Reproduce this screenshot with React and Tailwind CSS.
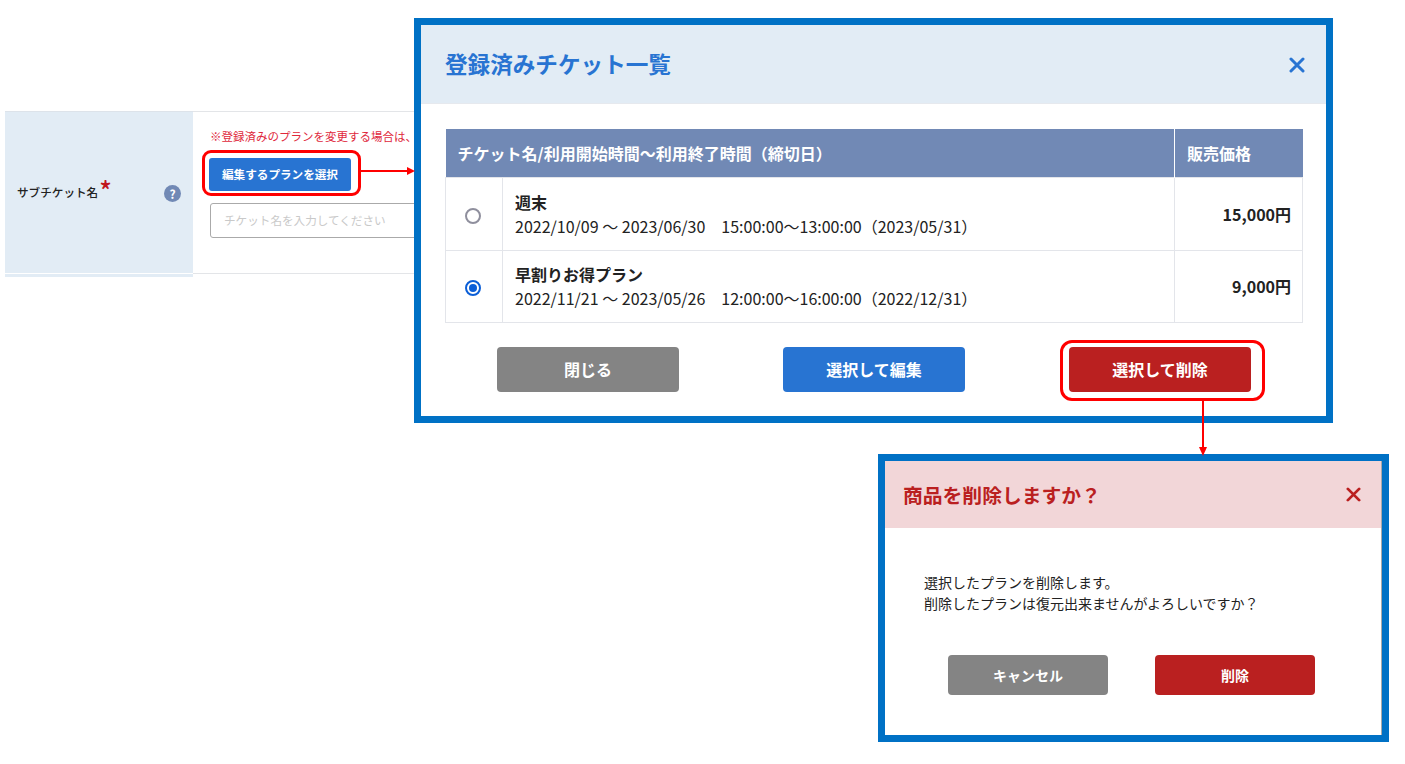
import React from "react";

function Radio({ checked }) {
  return (
    <span className={`flex h-4 w-4 items-center justify-center rounded-full border-2 ${checked ? "border-[#0b5ed7]" : "border-[#8f8f9d]"}`}>
      {checked && <span className="h-2 w-2 rounded-full bg-[#0b5ed7]" />}
    </span>
  );
}

function Close({ color, size }) {
  return (
    <svg width={size} height={size} viewBox="0 0 16 16" fill="none" stroke={color} strokeWidth="3" strokeLinecap="round">
      <path d="M2 2 L14 14 M14 2 L2 14" />
    </svg>
  );
}

const rows = [
  { name: "週末", range: "2022/10/09 ～ 2023/06/30　15:00:00～13:00:00（2023/05/31）", price: "15,000円", checked: false, h: "h-[73px]" },
  { name: "早割りお得プラン", range: "2022/11/21 ～ 2023/05/26　12:00:00～16:00:00（2022/12/31）", price: "9,000円", checked: true, h: "h-[72px]" },
];

function Btn({ className, children }) {
  return (
    <button className={`flex items-center justify-center rounded-[4px] font-bold text-white ${className}`}>
      {children}
    </button>
  );
}

function FormRow() {
  return (
    <div className="absolute left-[5px] top-[111px] flex h-[166px] w-[410px] items-start">
      <div className="flex h-[166px] w-[188px] shrink-0 flex-col border-t border-[#dde3ea]">
        <div className="flex h-[161px] items-center justify-between bg-[#e2ecf5] pl-3 pr-3">
          <span className="flex items-start pt-[4px] text-[11.6px] font-medium text-[#222]">
            サブチケット名
            <span className="-mt-[9px] ml-[1px] text-[26px] leading-[30px] text-[#c0161c]">*</span>
          </span>
          <span className="mt-[2px] flex h-[17px] w-[17px] items-center justify-center rounded-full bg-[#7189b5] text-[12px] font-bold text-white">?</span>
        </div>
        <div className="h-[1px] bg-white" />
        <div className="h-[3px] bg-[#e2ecf5]" />
      </div>
      <div className="h-[163px] flex-1 border-y border-[#e3e5e8] pl-[17px] pt-[16px]">
        <p className="whitespace-nowrap text-[11.5px] leading-[16px] text-[#e0283c]">※登録済みのプランを変更する場合は、</p>
        <button className="-ml-[1px] mt-[14px] flex h-[33px] w-[142px] items-center justify-center rounded-[3px] bg-[#2874d2] text-[11.6px] font-bold text-white">
          編集するプランを選択
        </button>
        <div className="mt-[12px] flex h-[35px] w-[260px] items-center rounded-[3px] border border-[#aaaaaa] pl-[13px] text-[11.6px] text-[#c9c9c9]">
          チケット名を入力してください
        </div>
      </div>
    </div>
  );
}

function TicketModal() {
  return (
    <section className="absolute left-[414px] top-[18px] h-[405px] w-[919px] border-[7px] border-[#0071c5] bg-white">
      <header className="flex h-[79px] items-center justify-between border-b border-[#e6e9ee] bg-[#e2ecf5] pl-6 pr-[21px]">
        <h2 className="text-[22.6px] font-bold text-[#2874d2]">登録済みチケット一覧</h2>
        <span className="mt-[1px] flex"><Close color="#2874d2" size={16} /></span>
      </header>
      <div className="pl-[24px] pt-[25px]">
        <table className="w-[857px] table-fixed border-collapse text-[#222]">
          <colgroup>
            <col className="w-[57px]" />
            <col className="w-[672px]" />
            <col className="w-[128px]" />
          </colgroup>
          <thead>
            <tr className="h-[48px] bg-[#7189b5] text-left text-[16px] text-white">
              <th colSpan={2} className="pl-3 font-bold">チケット名/利用開始時間～利用終了時間（締切日）</th>
              <th className="border-l border-white pl-3 font-bold">販売価格</th>
            </tr>
          </thead>
          <tbody>
            {rows.map((r) => (
              <tr key={r.name} className={r.h}>
                <td className="border border-[#e3e5ea]">
                  <div className="-ml-[2px] mt-[4px] flex justify-center"><Radio checked={r.checked} /></div>
                </td>
                <td className="border border-[#e3e5ea] pl-3 text-[16px] leading-[24px]">
                  <div className="font-bold">{r.name}</div>
                  <div className="whitespace-nowrap">{r.range}</div>
                </td>
                <td className="border border-[#e3e5ea] pr-[11px] text-right text-[16px] font-bold">{r.price}</td>
              </tr>
            ))}
          </tbody>
        </table>
        <div className="mt-[24px] flex gap-[104px] pl-[52px] text-[16px]">
          <Btn className="h-[45px] w-[182px] bg-[#848484]">閉じる</Btn>
          <Btn className="h-[45px] w-[182px] bg-[#2874d2]">選択して編集</Btn>
          <Btn className="h-[45px] w-[182px] bg-[#ba2020]">選択して削除</Btn>
        </div>
      </div>
    </section>
  );
}

function DeleteModal() {
  return (
    <section className="absolute left-[878px] top-[454px] h-[288px] w-[511px] border-[7px] border-[#0071c5] bg-white">
      <div className="h-full border-r border-[#a9a9a9]">
        <header className="flex h-[67px] items-center justify-between bg-[#f2d6d8] pl-[18px] pr-[20px]">
          <h2 className="text-[19.8px] font-bold text-[#ba2020]">商品を削除しますか？</h2>
          <Close color="#ba2020" size={15} />
        </header>
        <div className="pl-[39px] pt-[44px] text-[14px] leading-[21px] text-[#222]">
          <p>選択したプランを削除します。</p>
          <p>削除したプランは復元出来ませんがよろしいですか？</p>
        </div>
        <div className="mt-[41px] flex gap-[47px] pl-[63px] text-[14px]">
          <Btn className="h-[40px] w-[160px] bg-[#848484]">キャンセル</Btn>
          <Btn className="h-[40px] w-[160px] bg-[#ba2020]">削除</Btn>
        </div>
      </div>
    </section>
  );
}

function Annotations() {
  return (
    <>
      <div className="absolute left-[202px] top-[150px] h-[46px] w-[159px] rounded-[9px] border-[3px] border-[#ff0000]" />
      <div className="absolute left-[1060px] top-[340px] h-[61px] w-[205px] rounded-[12px] border-[3px] border-[#ff0000]" />
      <svg className="absolute left-[361px] top-[164px]" width="54" height="14" viewBox="0 0 54 14">
        <path d="M0 7 H47" stroke="#ff0000" strokeWidth="2" />
        <path d="M46 3 L54 7 L46 11 Z" fill="#ff0000" />
      </svg>
      <svg className="absolute left-[1196px] top-[400px]" width="14" height="56" viewBox="0 0 14 56">
        <path d="M7 0 V49" stroke="#ff0000" strokeWidth="2" />
        <path d="M3 47 L11 47 L7 56 Z" fill="#ff0000" />
      </svg>
    </>
  );
}

export default function App() {
  return (
    <div className="relative h-[764px] w-[1405px] overflow-hidden bg-white font-['Noto_Sans_CJK_JP','Noto_Sans',sans-serif]">
      <FormRow />
      <TicketModal />
      <DeleteModal />
      <Annotations />
    </div>
  );
}
